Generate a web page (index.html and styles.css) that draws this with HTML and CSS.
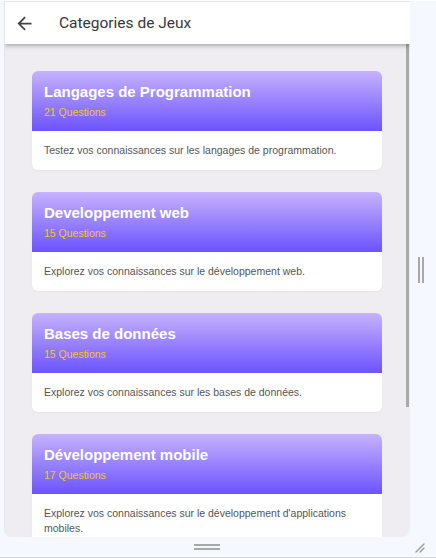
FILE: index.html
```html
<!DOCTYPE html>
<html lang="fr">
<head>
<meta charset="utf-8">
<title>Categories de Jeux</title>
<link rel="stylesheet" href="styles.css">
</head>
<body>
<div class="shell">
  <div class="top-gap"></div>
  <div class="frame">
    <header class="appbar">
      <button class="back" aria-label="Retour">
        <svg width="21" height="21" viewBox="0 0 24 24"><path d="M20 11H7.83l5.59-5.59L12 4l-8 8 8 8 1.41-1.41L7.83 13H20v-2z" fill="#444"/></svg>
      </button>
      <h1 class="title">Categories de Jeux</h1>
    </header>
    <div class="content">
      <div class="list">
        <article class="card">
          <div class="card-head">
            <h2 class="card-title">Langages de Programmation</h2>
            <div class="card-count">21 Questions</div>
          </div>
          <p class="card-desc">Testez vos connaissances sur les langages de programmation.</p>
        </article>
        <article class="card">
          <div class="card-head">
            <h2 class="card-title">Developpement web</h2>
            <div class="card-count">15 Questions</div>
          </div>
          <p class="card-desc">Explorez vos connaissances sur le développement web.</p>
        </article>
        <article class="card">
          <div class="card-head">
            <h2 class="card-title">Bases de données</h2>
            <div class="card-count">15 Questions</div>
          </div>
          <p class="card-desc">Explorez vos connaissances sur les bases de données.</p>
        </article>
        <article class="card">
          <div class="card-head">
            <h2 class="card-title">Développement mobile</h2>
            <div class="card-count">17 Questions</div>
          </div>
          <p class="card-desc">Explorez vos connaissances sur le développement d'applications mobiles.</p>
        </article>
      </div>
      <div class="scrollbar"><div class="thumb"></div></div>
    </div>
  </div>
  <div class="side">
    <div class="side-handle"><span></span><span></span></div>
  </div>
  <div class="bottom">
    <div class="bottom-handle"><span></span><span></span></div>
  </div>
  <div class="corner">
    <svg width="12" height="12" viewBox="0 0 12 12"><path d="M11 3L3 11M11 7L7 11" stroke="#9a9a9a" stroke-width="1.4" stroke-linecap="round" fill="none"/></svg>
  </div>
</div>
</body>
</html>
```
FILE: styles.css
```css
* { box-sizing: border-box; }
html, body { margin: 0; padding: 0; }
body {
  width: 436px;
  height: 558px;
  overflow: hidden;
  background: #f5f8fe;
  font-family: "Liberation Sans", Arial, sans-serif;
}
.shell {
  display: grid;
  grid-template-columns: 4px 406px 1fr;
  grid-template-rows: 1px 536px 1fr;
  height: 558px;
  border-bottom: 1px solid #d3d8df;
}
.top-gap { grid-column: 1 / 4; background: #ffffff; }
.frame {
  grid-column: 2;
  grid-row: 2;
  display: flex;
  flex-direction: column;
  border-left: 1px solid #e2e5ea;
  border-top: 1px solid #e6e8ec;
  background: #efedf2;
  border-radius: 0 0 8px 8px;
  overflow: hidden;
}
.appbar {
  position: relative;
  z-index: 1;
  height: 42px;
  flex: none;
  display: flex;
  align-items: center;
  background: #ffffff;
  box-shadow: 0 2px 4px rgba(0, 0, 0, 0.28);
}
.back {
  margin-left: 9px;
  width: 21px;
  height: 21px;
  padding: 0;
  border: 0;
  background: none;
  display: flex;
}
.title {
  margin: 0 0 0 24px;
  font-family: Roboto, "Liberation Sans", sans-serif;
  font-weight: 400;
  font-size: 15.5px;
  color: #383838;
}
.content {
  flex: 1;
  display: flex;
  min-height: 0;
}
.list {
  flex: 1;
  padding: 27px 24px 0 27px;
  display: flex;
  flex-direction: column;
  gap: 22px;
  overflow: hidden;
}
.card {
  flex: none;
  background: #ffffff;
  border-radius: 6px;
  overflow: hidden;
  box-shadow: 0 1px 2px rgba(0, 0, 0, 0.04);
}
.card-head {
  padding: 12px 12px;
  background: linear-gradient(to bottom, #c6b2fd, #6b53fe);
}
.card-title {
  margin: 0 0 5px;
  font-size: 15px;
  line-height: 18px;
  font-weight: 700;
  color: #ffffff;
}
.card-count {
  font-size: 10.5px;
  line-height: 13px;
  color: #f5c810;
}
.card-desc {
  margin: 0;
  padding: 12px 12px;
  font-size: 10.5px;
  line-height: 15px;
  color: #555;
}
.scrollbar {
  width: 4px;
  flex: none;
}
.thumb {
  width: 3px;
  height: 363px;
  background: #a9a9a9;
}
.side {
  grid-column: 3;
  grid-row: 2;
  display: flex;
  align-items: center;
  padding-left: 8px;
}
.side-handle {
  display: flex;
  gap: 2px;
  margin-top: 1px;
}
.side-handle span {
  width: 2px;
  height: 26px;
  background: #a8a8a8;
}
.bottom {
  grid-column: 2;
  grid-row: 3;
  display: flex;
  justify-content: center;
  align-items: center;
}
.bottom-handle {
  display: flex;
  flex-direction: column;
  gap: 2px;
}
.bottom-handle span {
  width: 26px;
  height: 2px;
  background: #a8a8a8;
}
.corner {
  grid-column: 3;
  grid-row: 3;
  display: flex;
  justify-content: flex-start;
  align-items: center;
  padding-left: 3px;
}
```
